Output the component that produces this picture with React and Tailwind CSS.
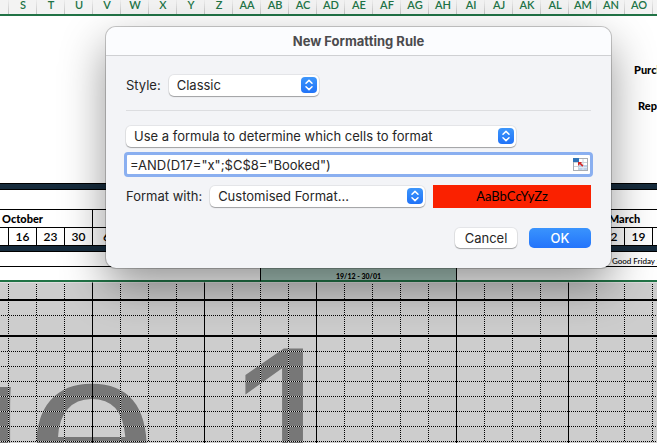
import React from 'react'

const COLUMNS = ['Q', 'R', 'S', 'T', 'U', 'V', 'W', 'X', 'Y', 'Z', 'AA', 'AB', 'AC', 'AD', 'AE', 'AF', 'AG', 'AH', 'AI', 'AJ', 'AK', 'AL', 'AM', 'AN', 'AO', 'AP']

const MONTHS = [
  { name: 'October', days: [2, 9, 16, 23, 30] },
  { name: 'November', days: [6, 13, 20, 27] },
  { name: 'December', days: [4, 11, 18, 25] },
  { name: 'January', days: [1, 8, 15, 22, 29] },
  { name: 'February', days: [5, 12, 19, 26] },
  { name: 'March', days: [5, 12, 19, 26] },
]

// last column of every month gets a solid line
const MONTH_ENDS = [4, 8, 12, 17, 21, 25]

const ROWS = ['head', 'dotted', 'thick', ...Array(40).fill('dotted')]

const ROW_STYLES = {
  head: 'h-[19px] border-t border-t-[#dedede] border-b-2 border-b-black',
  dotted: 'h-[15px]',
  thick: 'h-[21px] border-b-2 border-b-black',
}

const DOTS_BOTH = '[background:linear-gradient(90deg,#000_1px,#d0d0d0_1px)_left_bottom/2px_1px_repeat-x,linear-gradient(#d0d0d0_1px,#000_1px)_right_top/1px_2px_repeat-y]'
const DOTS_RIGHT = '[background:linear-gradient(#d0d0d0_1px,#000_1px)_right_top/1px_2px_repeat-y]'
const DOTS_BOTTOM = '[background:linear-gradient(90deg,#000_1px,#d0d0d0_1px)_left_bottom/2px_1px_repeat-x]'

const cellStyle = (row, col) => {
  const solid = MONTH_ENDS.includes(col)
  if (row === 'dotted') {
    return solid ? `border-r border-r-black ${DOTS_BOTTOM}` : DOTS_BOTH
  }
  return solid ? 'border-r border-r-black' : DOTS_RIGHT
}

const NavyBar = () => (
  <tr>
    <td colSpan={26} className="h-[7px] border-y border-black bg-[#172c3d]"></td>
  </tr>
)

const Sheet = () => {
  return (
    <div className="relative -ml-12">
      <p aria-hidden="true" className="absolute left-[-346px] top-[311px] whitespace-nowrap font-['Liberation_Sans',sans-serif] text-[236px] leading-none text-[#777777]">
        Page 1
      </p>
      <table className="relative w-[729px] table-fixed border-separate border-spacing-0 pl-px font-['Lato',sans-serif] text-black">
        <thead>
          <tr>
            {COLUMNS.map((col) => (
              <th key={col} className="h-4 border-b-2 border-b-[#217346] p-0 align-top text-[11px] font-semibold leading-[10px] text-[#217346] [background:linear-gradient(#eeeeee,#c4c4c4)_right_top/1px_14px_no-repeat,#f3f3f3]">
                {col}
              </th>
            ))}
          </tr>
        </thead>
        <tbody>
          <tr>
            <td colSpan={26} className="h-[167px] bg-white py-0 pl-[681px] pr-0 align-top text-[11px] font-black leading-9">
              <div className="w-0 whitespace-nowrap pt-9">Purch</div>
              <div className="w-0 whitespace-nowrap pl-1">Rep</div>
            </td>
          </tr>
          <NavyBar />
          <tr>
            <td colSpan={26} className="h-5 border-b border-black bg-white"></td>
          </tr>
          <tr>
            {MONTHS.map((month) => (
              <th key={month.name} colSpan={month.days.length} className="h-[18px] border-b border-r border-black bg-white p-0 text-[11px] font-black leading-4">
                {month.name}
              </th>
            ))}
          </tr>
          <tr>
            {MONTHS.map((month) =>
              month.days.map((day) => (
                <td key={month.name + day} className="h-[17px] border-r border-black bg-white p-0 text-center text-xs font-semibold leading-4">
                  {day}
                </td>
              ))
            )}
          </tr>
          <NavyBar />
          <tr>
            <td colSpan={23} className="h-[15px] border-b border-black bg-white"></td>
            <td colSpan={3} className="h-[15px] whitespace-nowrap border-b border-black bg-white p-0 text-center align-bottom text-[8px] font-medium leading-[10px]">
              Good Friday 29
            </td>
          </tr>
          <tr>
            <td colSpan={11} className="h-[15px] border-b-2 border-r border-b-[#217346] border-r-black bg-white"></td>
            <td colSpan={7} className="h-[15px] border-b-2 border-r border-b-[#217346] border-r-black bg-[#a9c7bd] p-0 text-center align-bottom text-[7px] font-black leading-[8px]">
              19/12 - 30/01
            </td>
            <td colSpan={8} className="h-[15px] border-b-2 border-b-[#217346] bg-white"></td>
          </tr>
          {ROWS.map((row, i) => (
            <tr key={i}>
              {COLUMNS.map((col, c) => (
                <td key={col} className={`p-0 ${ROW_STYLES[row]} ${cellStyle(row, c)}`}></td>
              ))}
            </tr>
          ))}
        </tbody>
      </table>
    </div>
  )
}

const Chevrons = () => (
  <svg viewBox="0 0 16 16" className="pointer-events-none absolute right-0.5 top-0.5 size-4">
    <defs>
      <linearGradient id="knob" x1="0" y1="0" x2="0" y2="1">
        <stop offset="0" stopColor="#3d96fb" />
        <stop offset="1" stopColor="#2173f8" />
      </linearGradient>
    </defs>
    <rect width="16" height="16" rx="4" fill="url(#knob)" />
    <path d="M5 6.300 8 3.400l3 2.900M5 9.700l3 2.900 3-2.900" fill="none" stroke="#fff" strokeWidth="1.5" strokeLinecap="round" strokeLinejoin="round" />
  </svg>
)

const PopUp = ({ id, label, value, width }) => (
  <div className={`relative ${width}`}>
    <select id={id} aria-label={label} className="block h-[21px] w-full appearance-none rounded-[5px] bg-white pb-0.5 pl-2 pr-6 text-[13px] leading-4 shadow-[0_0_0_1px_rgba(0,0,0,0.06),0_1px_1px_rgba(0,0,0,0.3)] outline-none">
      <option>{value}</option>
    </select>
    <Chevrons />
  </div>
)

const RangeIcon = () => (
  <svg viewBox="0 0 15 13" className="h-[13px] w-[15px]">
    <rect x="0.5" y="0.5" width="14" height="12" fill="#fff" stroke="#a9adb3" />
    <path d="M5.500 1v11M10 1v11M1 4.500h13M1 8.500h13" stroke="#cdd3da" />
    <rect x="6" y="7" width="8" height="5" fill="#bdd2ea" />
    <path d="M10 7v5M6 9.500h8" stroke="#dfe9f4" />
    <rect width="6" height="4" fill="#2f74b8" />
    <path d="M5 4h4L8 5l2.500 2.500-1.200 1.200L6.800 6.200l-1.300 1.300H5z" fill="#cf2a2a" />
  </svg>
)

const FormattingDialog = () => {
  const [formula, setFormula] = React.useState('=AND(D17="x";$C$8="Booked")')

  return (
    <div
      role="dialog"
      aria-labelledby="dialog-title"
      className="absolute left-[106px] right-[46px] top-[27px] overflow-hidden rounded-[10px] bg-[#f3f4f7] font-['Inter',sans-serif] text-[13px] leading-5 text-[#262626] shadow-[0_0_0_1px_rgba(0,0,0,0.2),0_18px_45px_rgba(0,0,0,0.42)]"
    >
      <h1 id="dialog-title" className="h-[29px] border-b border-[#cfd0d3] bg-[#fbfcfe] text-center font-bold leading-7 text-[#4b4b4d]">
        New Formatting Rule
      </h1>
      <form className="px-5 pb-5 pt-[19px]" onSubmit={(e) => e.preventDefault()}>
        <div className="flex items-start gap-2">
          <label htmlFor="style">Style:</label>
          <PopUp id="style" value="Classic" width="w-[150px]" />
        </div>

        <hr className="mb-[15px] mt-3.5 border-[#dcdde0]" />

        <PopUp id="rule" label="Rule type" value="Use a formula to determine which cells to format" width="w-[390px]" />

        <div className="-mx-0.5 mt-[5px] flex h-[25px] items-center rounded-[4px] border-[3px] border-[#8aaff0] bg-white pr-0.5">
          <input
            aria-label="Formula"
            value={formula}
            onChange={(e) => setFormula(e.target.value)}
            className="h-[19px] min-w-0 flex-1 bg-transparent pl-[3px] outline-none"
          />
          <button type="button" aria-label="Select range">
            <RangeIcon />
          </button>
        </div>

        <div className="mt-2 flex items-center">
          <label htmlFor="format" className="mr-2 pb-0.5">Format with:</label>
          <PopUp id="format" value="Customised Format..." width="w-[215px]" />
          <div className="ml-2 h-[23px] flex-1 bg-[#fa2100] text-center font-['Lato',sans-serif] text-[13px] leading-[23px] text-black">
            AaBbCcYyZz
          </div>
        </div>

        <div className="mt-5 flex justify-end gap-3">
          <button type="button" className="h-5 w-[62px] rounded-[5px] bg-white shadow-[0_0_0_1px_rgba(0,0,0,0.06),0_1px_1px_rgba(0,0,0,0.3)]">
            Cancel
          </button>
          <button type="submit" className="h-5 w-[62px] rounded-[5px] bg-linear-to-b from-[#3a93fd] to-[#2474fb] font-medium text-white">
            OK
          </button>
        </div>
      </form>
    </div>
  )
}

const App = () => {
  return (
    <main className="relative h-screen overflow-hidden bg-[#cdcdcd]">
      <Sheet />
      <FormattingDialog />
    </main>
  )
}

export default App
